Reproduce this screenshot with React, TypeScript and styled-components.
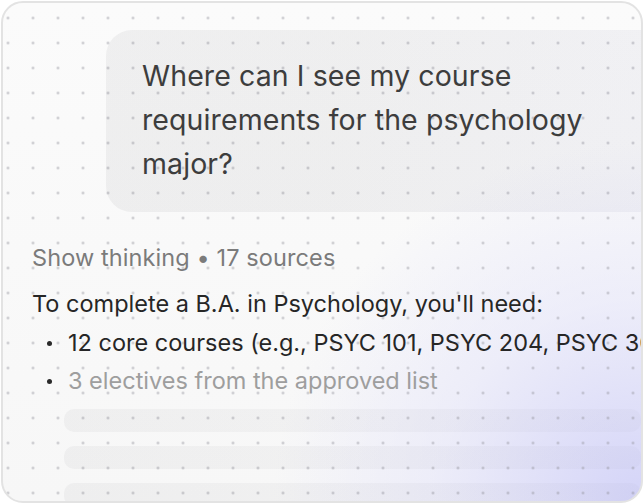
import styled, { createGlobalStyle } from "styled-components";

const GlobalStyle = createGlobalStyle`
  html, body {
    margin: 0;
    padding: 0;
    background: #ffffff;
  }
  body {
    font-family: Inter, "Noto Sans", "Liberation Sans", sans-serif;
    -webkit-font-smoothing: antialiased;
  }
`;

const answerItems = [
  { text: "12 core courses (e.g., PSYC 101, PSYC 204, PSYC 305, PSYC 410)", muted: false },
  { text: "3 electives from the approved list", muted: true },
];

export default function App() {
  return (
    <>
      <GlobalStyle />
      <Card>
        <Bubble>Where can I see my course requirements for the psychology major?</Bubble>

        <Meta>Show thinking • 17 sources</Meta>

        <Answer>
          <Lead>To complete a B.A. in Psychology, you'll need:</Lead>
          <List>
            {answerItems.map((item, idx) => (
              <Item key={idx} $muted={item.muted}>
                {item.text}
              </Item>
            ))}
          </List>
        </Answer>

        <Skeleton>
          <Bar />
          <Bar />
          <Bar />
        </Skeleton>
      </Card>
    </>
  );
}

//Styled Components
const Card = styled.div`
  box-sizing: border-box;
  margin: 1px;
  width: 642px;
  height: 502px;
  border: 2px solid #e3e3e3;
  border-radius: 22px;
  overflow: hidden;
  display: flex;
  flex-direction: column;
  background-color: #f8f8f8;
  background-image:
    radial-gradient(circle, rgba(150, 150, 160, 0.55) 0.9px, transparent 1.6px),
    radial-gradient(ellipse 72% 90% at 100% 100%, rgba(210, 210, 248, 0.95) 0%, rgba(228, 228, 250, 0.55) 45%, rgba(248, 248, 252, 0) 80%),
    linear-gradient(180deg, #fbfbfb 0%, #f7f7f7 100%);
  background-size: 25px 25px, 100% 100%, 100% 100%;
  background-position: 17.5px 2.5px, 0 0, 0 0;
`;

const Bubble = styled.div`
  margin: 27px -60px 0 103px;
  padding: 24px 100px 26px 36px;
  border-radius: 26px;
  background: linear-gradient(100deg, rgba(20, 20, 30, 0.05) 40%, rgba(60, 60, 140, 0.05) 100%);
  color: #3d3d3d;
  font-size: 28.5px;
  line-height: 44px;
  letter-spacing: 0.1px;
`;

const Meta = styled.div`
  margin: 32px 0 0 29px;
  color: #7b7b7b;
  font-size: 23.5px;
  line-height: 28px;
  letter-spacing: 0.1px;
`;

const Answer = styled.div`
  margin: 13px 0 0 29px;
  color: #262626;
  font-size: 23.5px;
  line-height: 38.5px;
  white-space: nowrap;
`;

const Lead = styled.p`
  margin: 0;
`;

const List = styled.ul`
  margin: 0;
  padding: 0 0 0 36px;
  list-style: none;
`;

const Item = styled.li<{ $muted: boolean }>`
  position: relative;
  color: ${(p) => (p.$muted ? "#9e9e9e" : "#262626")};

  &::before {
    content: "";
    position: absolute;
    left: -21px;
    top: 17px;
    width: 5px;
    height: 5px;
    border-radius: 50%;
    background: #2a2a2a;
  }
`;

const Skeleton = styled.div`
  margin: 8px 0 0 61px;
  display: flex;
  flex-direction: column;
  gap: 14px;
`;

const Bar = styled.div`
  flex-shrink: 0;
  height: 23px;
  border-radius: 10px;
  background: linear-gradient(90deg, rgba(20, 20, 30, 0.04), rgba(20, 20, 30, 0.02));
`;
